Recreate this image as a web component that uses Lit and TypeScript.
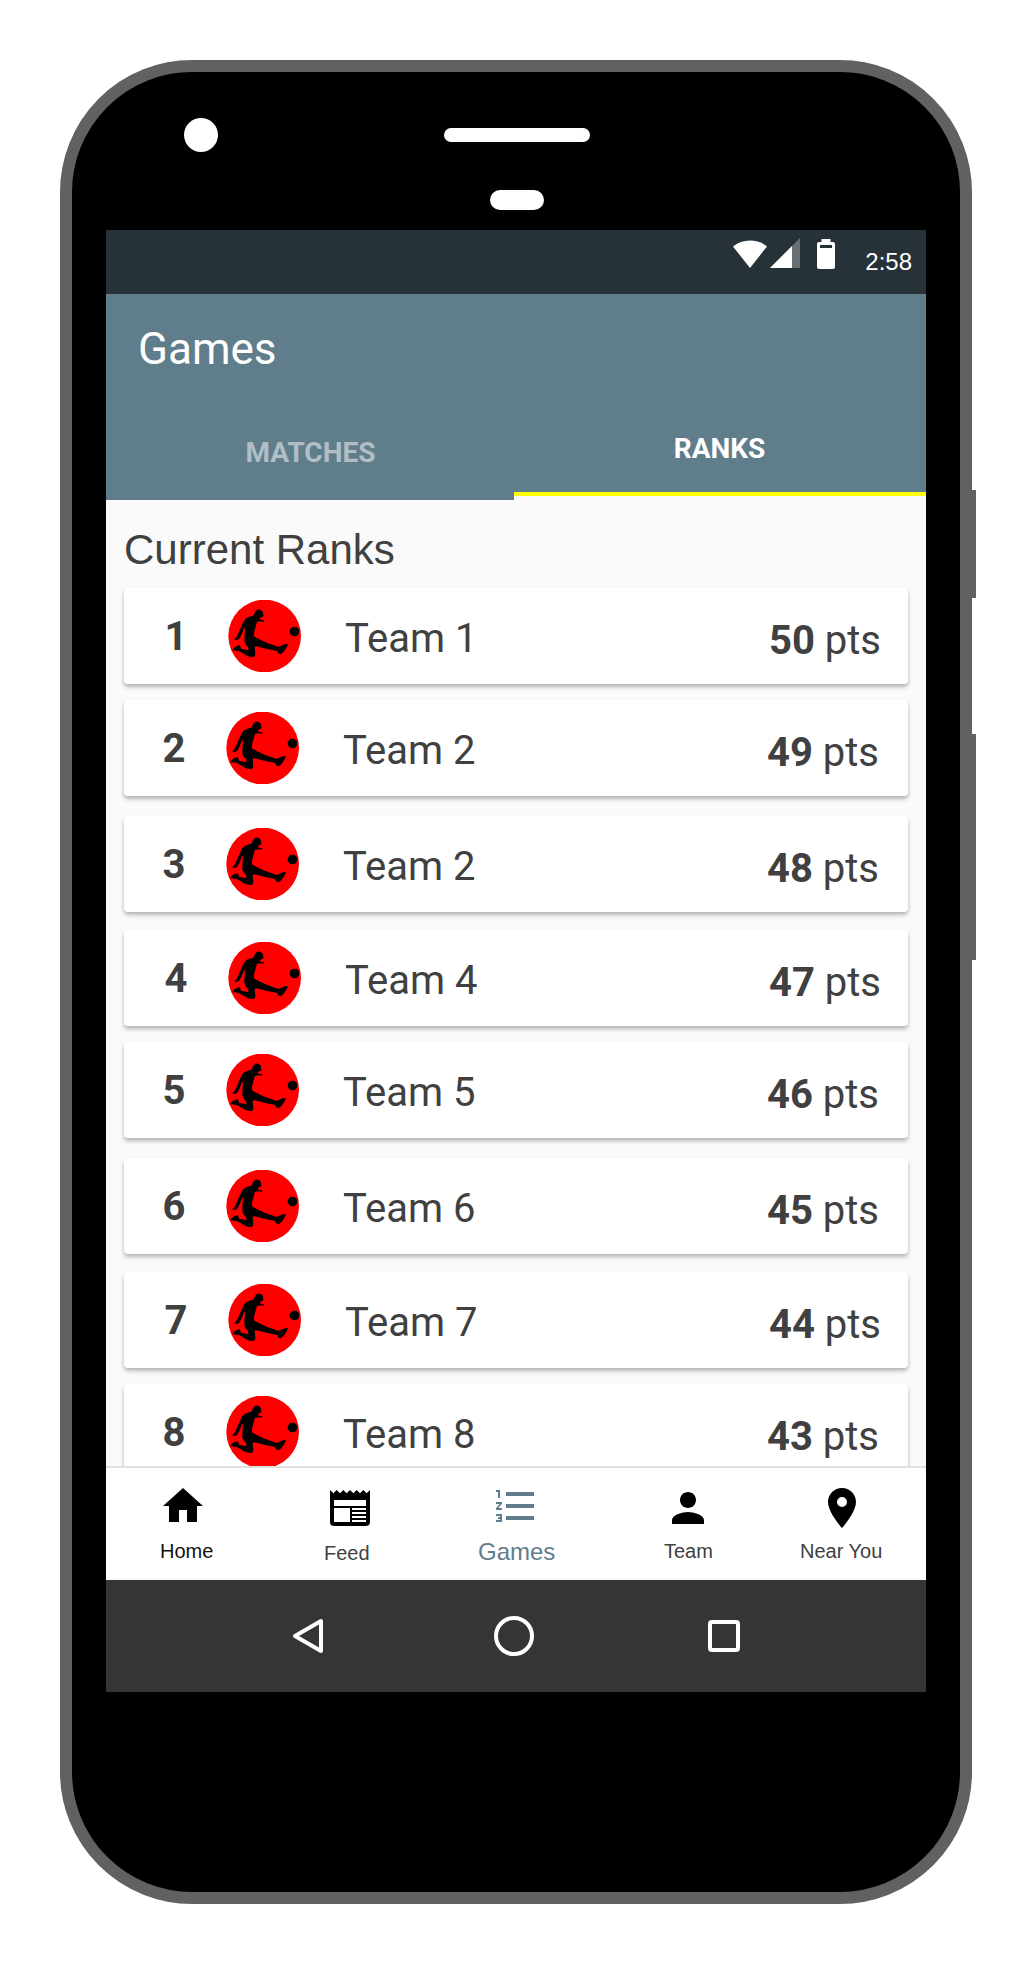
import { LitElement, html, css, svg } from "lit";
import { customElement, property } from "lit/decorators.js";

interface Rank { pos: number; name: string; pts: number; }

const RANKS: Rank[] = [
  { pos: 1, name: "Team 1", pts: 50 },
  { pos: 2, name: "Team 2", pts: 49 },
  { pos: 3, name: "Team 2", pts: 48 },
  { pos: 4, name: "Team 4", pts: 47 },
  { pos: 5, name: "Team 5", pts: 46 },
  { pos: 6, name: "Team 6", pts: 45 },
  { pos: 7, name: "Team 7", pts: 44 },
  { pos: 8, name: "Team 8", pts: 43 },
];

const NAV = [
  { key: "home", label: "Home", icon: svg`<path d="M10 20v-6h4v6h5v-8h3L12 3 2 12h3v8z"/>` },
  { key: "feed", label: "Feed", icon: svg`<path fill-rule="evenodd" d="M20 11H4V8h16zM20 13H13V12h7zM20 15H13V14h7zM20 17H13V16h7zM20 19H13V18h7zM12 19H4V12h8zM20.33 4.67 18.67 3 17 4.67 15.33 3l-1.66 1.67L12 3l-1.67 1.67L8.67 3 7 4.67 5.33 3 3.67 4.67 2 3v16a2 2 0 0 0 2 2h16a2 2 0 0 0 2-2V3z"/>` },
  { key: "games", label: "Games", icon: svg`<path d="M2 17h2v.5H3v1h1v.5H2v1h3v-4H2zM3 8h1V4H2v1h1zM2 11h1.8L2 13.1v.9h3v-1H3.2L5 10.900V10H2zM7 5v2h14V5zM7 19h14v-2H7zM7 13h14v-2H7z"/>` },
  { key: "team", label: "Team", icon: svg`<path d="M12 12c2.210 0 4-1.790 4-4s-1.790-4-4-4-4 1.790-4 4 1.790 4 4 4zm0 2c-2.670 0-8 1.340-8 4v2h16v-2c0-2.660-5.330-4-8-4z"/>` },
  { key: "near", label: "Near You", icon: svg`<path d="M12 2C8.130 2 5 5.130 5 9c0 5.250 7 13 7 13s7-7.750 7-13c0-3.870-3.130-7-7-7zm0 9.500a2.500 2.500 0 1 1 0-5 2.500 2.500 0 0 1 0 5z"/>` },
];

@customElement("team-badge")
class TeamBadge extends LitElement {
  static styles = css`
    :host { display: block; width: 73px; height: 72px; }
    .badge { display: block; width: 73px; height: 72px; }
  `;
  render() {
    return html`<svg class="badge" viewBox="54 45 219 216">
      <circle cx="164" cy="153" r="109" fill="#f00"/>
      <circle cx="253.500" cy="139.500" r="14.500"/>
      <path d="M133 86C136 77 143 72 150 74C158 77 160 82 159 88L161 92L157 96L149 99L152 104L163 106L162 110L153 109L140 111C140 118 137 124 135 131C133 140 130 148 133 155L151 164L170 173L204 185C213 186 217 178 231 177L234 179L229 188L221 200L212 208L204 205L202 198L172 192L140 184L134 185L136 206C136 213 132 217 126 216C113 215 103 207 91 200C83 196 75 199 67 195C70 187 80 183 90 180L91 185L93 191L116 196L113 184C107 181 103 174 103 165C103 150 105 139 105 126C99 134 97 148 89 159C84 166 77 166 73 163L75 160C83 156 86 140 92 129C98 119 99 108 107 101C114 94 123 95 130 92Z"/>
    </svg>`;
  }
}

@customElement("rank-card")
class RankCard extends LitElement {
  @property({ attribute: false }) rank!: Rank;
  static styles = css`
    :host { display: block; }
    .card {
      box-sizing: border-box; height: 96px; background: #fff; border-radius: 4px;
      box-shadow: 0 3px 4px rgba(0,0,0,.27), 0 1px 2px rgba(0,0,0,.04);
      display: grid; grid-template-columns: 102px 117px 1fr auto;
      padding: 0 29px 0 0; color: #404040;
      font: 400 40px/48px Roboto, sans-serif;
    }
    .shift { grid-template-columns: 104px 117px 1fr auto; padding-right: 27px; }
    .pos { font-weight: 700; padding: 25px 0 0 38.500px; }
    .shift .pos { padding-left: 40.500px; }
    .badge { padding-top: 12px; }
    .name { padding-top: 27px; }
    .pts { padding-top: 29px; }
    .pts b { font-weight: 700; }
  `;
  render() {
    const r = this.rank;
    return html`<div class="card ${r.pos % 3 === 1 ? "shift" : ""}">
      <div class="pos">${r.pos}</div>
      <div class="badge"><team-badge></team-badge></div>
      <div class="name">${r.name}</div>
      <div class="pts"><b>${r.pts}</b> pts</div>
    </div>`;
  }
}

@customElement("app-root")
class AppRoot extends LitElement {
  static styles = css`
    :host { display: block; width: 1032px; height: 1964px; background: #fff; font-family: "Liberation Sans", Arial, sans-serif; overflow: hidden; }
    .page { padding: 60px; box-sizing: border-box; width: 1032px; height: 1964px; }
    .phone { position: relative; box-sizing: border-box; width: 912px; height: 1844px; border: 12px solid #616161; border-radius: 132px; background: #000; padding: 0 34px; }
    .key { position: absolute; left: 900px; width: 4px; background: #616161; }
    .power { top: 418px; height: 108px; }
    .volume { top: 662px; height: 226px; }
    .bezel { height: 158px; display: grid; grid-template-columns: 338px 146px 1fr; }
    .camera { width: 34px; height: 34px; border-radius: 50%; background: #fff; margin: 46px 0 0 78px; }
    .ear { display: flex; flex-direction: column; align-items: center; padding-top: 56px; gap: 48px; }
    .speaker { width: 146px; height: 14px; border-radius: 7px; background: #fff; }
    .sensor { width: 54px; height: 20px; border-radius: 10px; background: #fff; }
    .screen { width: 820px; height: 1462px; display: flex; flex-direction: column; background: #fafafa; }
    .status { height: 64px; background: #263238; display: flex; flex: none; justify-content: flex-end; color: #fff; padding-right: 14px; }
    .status svg { display: block; }
    .sig { width: 102px; height: 34px; margin: 6px 30px 0 0; }
    .clock { font-size: 24px; line-height: 28px; padding-top: 18px; }
    .bar { flex: none; height: 114px; background: #607d8b; color: #fff; }
    .title { font: 400 44px/52px Roboto, sans-serif; padding: 29px 0 0 32px; }
    .tabs { flex: none; height: 92px; display: grid; grid-template-columns: 408px 412px; align-items: start; text-align: center; font: 700 28px/32px Roboto, sans-serif; }
    .tab { box-sizing: border-box; background: #607d8b; height: 92px; padding: 29px 0 0 1px; color: #b0bec5; }
    .active { height: 88px; padding: 25px 1px 0 0; border-bottom: 4px solid #ff0; color: #fff; }
    .content { flex: none; height: 966px; padding: 0 18px; overflow: hidden; box-sizing: border-box; }
    .heading { font-size: 42px; line-height: 48px; height: 62px; padding-top: 26px; color: #404040; }
    .list { display: flex; flex-direction: column; }
    .list rank-card { margin-bottom: 16px; }
    .list rank-card:nth-child(3n + 2) { margin-bottom: 20px; }
    .list rank-card:nth-child(3n) { margin-bottom: 18px; }
    .nav { box-sizing: border-box; flex: none; height: 114px; border-top: 2px solid #e0e0e0; border-bottom: 2px solid #fafafa; background: #fff; display: grid; grid-template-columns: 160px 160px 180px 164px 156px; }
    .item { display: flex; flex-direction: column; font-size: 20px; line-height: 24px; color: #404040; }
    .item svg { display: block; width: 48px; height: 48px; fill: #000; flex: none; }
    .item span { white-space: nowrap; }
    .home svg { margin: 14px 0 0 53px; } .home span { margin: 9px 0 0 54px; color: #111; }
    .feed svg { margin: 16px 0 0 60px; } .feed span { margin: 9px 0 0 58px; }
    .games svg { margin: 14px 0 0 66px; fill: #607d8b; } .games span { margin: 10px 0 0 52px; font-size: 24px; color: #607d8b; }
    .team svg { margin: 16px 0 0 58px; } .team span { margin: 7px 0 0 58px; }
    .near svg { margin: 16px 0 0 48px; } .near span { margin: 7px 0 0 30px; }
    .system { flex: none; height: 112px; background: #353535; display: grid; grid-template-columns: 204px 208px 212px; justify-content: start; padding-left: 100px; align-items: center; justify-items: center; }
    .system svg { display: block; width: 44px; height: 44px; fill: none; stroke: #fff; stroke-width: 4; stroke-linejoin: round; }
  `;

  render() {
    return html`<div class="page"><div class="phone">
      <div class="key power"></div><div class="key volume"></div>
      <div class="bezel">
        <div class="camera"></div>
        <div class="ear"><div class="speaker"></div><div class="sensor"></div></div>
      </div>
      <div class="screen">
        <div class="status">
          <svg class="sig" viewBox="733 236 102 34" fill="#fff">
            <path d="M733 246.500C742 238.500 758 238.500 767 246.500L750 268Z"/>
            <path d="M800 238V268H770Z" fill-opacity=".3"/>
            <path d="M792 246V268H770Z"/>
            <path fill-rule="evenodd" d="M821.500 239h9v3h2.500a2 2 0 0 1 2 2v23a2 2 0 0 1-2 2h-14a2 2 0 0 1-2-2v-23a2 2 0 0 1 2-2h2.500zM820 245v3h12v-3z"/>
          </svg>
          <div class="clock">2:58</div>
        </div>
        <div class="bar"><div class="title">Games</div></div>
        <div class="tabs"><div class="tab">MATCHES</div><div class="tab active">RANKS</div></div>
        <div class="content">
          <div class="heading">Current Ranks</div>
          <div class="list">${RANKS.map((r) => html`<rank-card .rank=${r}></rank-card>`)}</div>
        </div>
        <div class="nav">
          ${NAV.map((n) => html`<div class="item ${n.key}"><svg viewBox="0 0 24 24">${n.icon}</svg><span>${n.label}</span></div>`)}
        </div>
        <div class="system">
          <svg viewBox="-22 -22 44 44"><path d="M-13 0L13-15V15Z"/></svg>
          <svg viewBox="-22 -22 44 44"><circle r="18"/></svg>
          <svg viewBox="-22 -22 44 44"><rect x="-14" y="-14" width="28" height="28" rx="2"/></svg>
        </div>
      </div>
    </div></div>`;
  }
}
